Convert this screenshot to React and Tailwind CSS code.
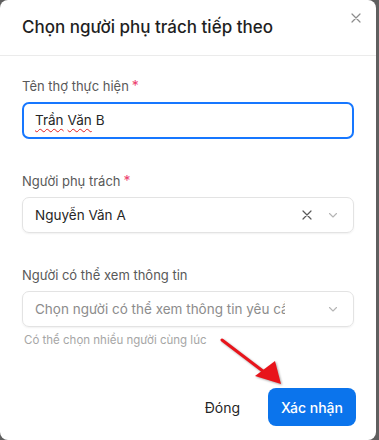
import React from 'react';

const font = { fontFamily: 'Inter, "Noto Sans", sans-serif' };

function Chevron() {
  return (
    <svg width="12" height="12" viewBox="0 0 12 12" fill="none" className="text-[#b5b5b5]">
      <path d="M2.5 4.5 L6 8 L9.5 4.5" stroke="currentColor" strokeWidth="1.1" strokeLinecap="round" strokeLinejoin="round" />
    </svg>
  );
}

function Cross({ size = 12, className = '' }) {
  return (
    <svg width={size} height={size} viewBox="0 0 12 12" fill="none" className={className}>
      <path d="M2 2 L10 10 M10 2 L2 10" stroke="currentColor" strokeWidth="1.2" strokeLinecap="round" />
    </svg>
  );
}

function Label({ children, required }) {
  return (
    <div className="text-[13px] leading-5 text-[#595959] mb-[6px] flex items-center">
      <span>{children}</span>
      {required && <span className="text-[#ec3f6e] ml-[3px] text-[14px]">*</span>}
    </div>
  );
}

export default function App() {
  return (
    <div className="w-[379px] h-[440px] bg-[#5f5f5f] overflow-hidden relative" style={font}>
      <div className="w-[376px] h-[440px] bg-white rounded-lg flex flex-col">
        {/* Header */}
        <header className="h-[56px] shrink-0 border-b border-[#ebebeb] flex items-center justify-between pl-[22px] pr-[14px]">
          <h1 className="text-[17px] font-medium text-[#1f1f1f]">Chọn người phụ trách tiếp theo</h1>
          <Cross size={12} className="text-[#8c8c8c] self-start mt-[12px]" />
        </header>

        {/* Body */}
        <div className="flex-1 px-[22px] pt-[20px] flex flex-col">
          <div className="mb-[32px]">
            <Label required>Tên thợ thực hiện</Label>
            <div className="h-[37px] rounded-[7px] border-2 border-[#1677ff] flex items-center px-[11px] text-[13.5px] text-[#262626]">
              <span className="underline decoration-wavy decoration-[#e02020] decoration-1 underline-offset-[3px]">Trần</span>
              <span className="ml-[4px] underline decoration-wavy decoration-[#e02020] decoration-1 underline-offset-[3px]">Văn</span>
              <span className="ml-[4px]">B</span>
            </div>
          </div>

          <div className="mb-[32px]">
            <Label required>Người phụ trách</Label>
            <div className="h-[36px] rounded-[7px] border border-[#e3e3e3] shadow-[0_1px_2px_rgba(0,0,0,0.06)] flex items-center pl-[12px] pr-[14px] text-[13.5px] text-[#262626]">
              <span className="flex-1">Nguyễn Văn A</span>
              <Cross size={12} className="text-[#595959] mr-[14px]" />
              <Chevron />
            </div>
          </div>

          <div>
            <Label>Người có thể xem thông tin</Label>
            <div className="h-[36px] rounded-[7px] border border-[#e3e3e3] shadow-[0_1px_2px_rgba(0,0,0,0.06)] flex items-center pl-[12px] pr-[14px] text-[13.5px] text-[#8c8c8c]">
              <span className="w-[250px] overflow-hidden whitespace-nowrap">Chọn người có thể xem thông tin yêu cầu</span>
              <span className="flex-1" />
              <Chevron />
            </div>
            <p className="text-[11.5px] leading-4 text-[#a6a6a6] mt-[5px] pl-[2px]">Có thể chọn nhiều người cùng lúc</p>
          </div>
        </div>

        {/* Footer */}
        <footer className="flex items-center justify-end gap-[28px] px-[20px] pb-[14px]">
          <button className="text-[14px] text-[#262626]">Đóng</button>
          <button className="h-[38px] w-[88px] rounded-[8px] bg-[#0b74ec] text-white text-[14px] font-medium">Xác nhận</button>
        </footer>
      </div>

      {/* Annotation arrow */}
      <svg className="absolute left-0 top-0 pointer-events-none" width="379" height="440" viewBox="0 0 379 440">
        <g style={{ filter: 'drop-shadow(1px 1px 1px rgba(0,0,0,0.35))' }}>
          <path d="M222 340 L272 378" stroke="#e8141b" strokeWidth="3" strokeLinecap="round" />
          <path d="M281 384 L255 376 L275 361 Z" fill="#e8141b" />
        </g>
      </svg>
    </div>
  );
}
